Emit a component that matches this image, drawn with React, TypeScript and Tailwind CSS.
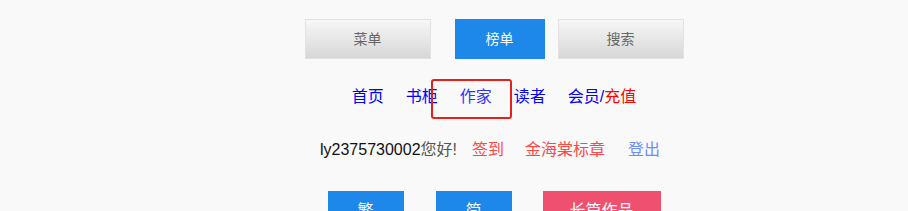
const font = "font-['Liberation_Sans','Noto_Sans_CJK_SC',sans-serif]";

function GrayButton({ label, className = "" }: { label: string; className?: string }) {
  return (
    <button
      className={`flex h-10 w-[126px] items-center justify-center border border-[#e2e2e2] bg-gradient-to-b from-[#f7f7f7] to-[#d7d7d7] text-sm text-[#666] ${className}`}
    >
      {label}
    </button>
  );
}

const navLinks = [
  { label: "首页", color: "text-[#0000ff]" },
  { label: "书柜", color: "text-[#0000ff]" },
  { label: "作家", color: "text-[#3333ff]", boxed: true },
  { label: "读者", color: "text-[#0000ff]" },
];

export default function App() {
  return (
    <div className={`h-[211px] w-full overflow-hidden bg-[#f9f9f9] pl-[80px] ${font}`}>
      {/* top tabs */}
      <div className="flex justify-center pt-[19px]">
        <GrayButton label="菜单" className="mr-[24px]" />
        <button className="flex h-10 w-[90px] items-center justify-center bg-[#1e88ea] text-sm text-white mr-[13px]">
          榜单
        </button>
        <GrayButton label="搜索" />
      </div>

      {/* nav links */}
      <div className="mt-[26px] flex justify-center gap-[22px] text-base leading-6">
        {navLinks.map((link) => (
          <a key={link.label} className={`relative ${link.color}`}>
            {link.label}
            {link.boxed && (
              <span className="pointer-events-none absolute left-[-29px] top-[-6px] h-10 w-[81px] rounded-[3px] border-2 border-[#e8201c]" />
            )}
          </a>
        ))}
        <a className="text-[#0000ff]">
          会员/<span className="text-[#ff0000]">充值</span>
        </a>
      </div>

      {/* user row */}
      <div className="mt-[29px] ml-[240px] flex text-base leading-6">
        <span className="text-[#111]">ly2375730002</span>
        <span className="text-[#555]">您好!</span>
        <a className="ml-[15px] text-[#ff4747]">签到</a>
        <a className="ml-[21px] text-[#ff4747]">金海棠标章</a>
        <a className="ml-[23px] text-[#6f8cff]">登出</a>
      </div>

      {/* bottom buttons */}
      <div className="mt-[29px] flex justify-center text-base text-white">
        <button className="flex h-10 w-[76px] items-center justify-center bg-[#1e88ea]">繁</button>
        <button className="ml-[32px] flex h-10 w-[76px] items-center justify-center bg-[#1e88ea]">简</button>
        <button className="ml-[31px] flex h-10 w-[118px] items-center justify-center bg-[#f05070]">长篇作品</button>
      </div>
    </div>
  );
}
